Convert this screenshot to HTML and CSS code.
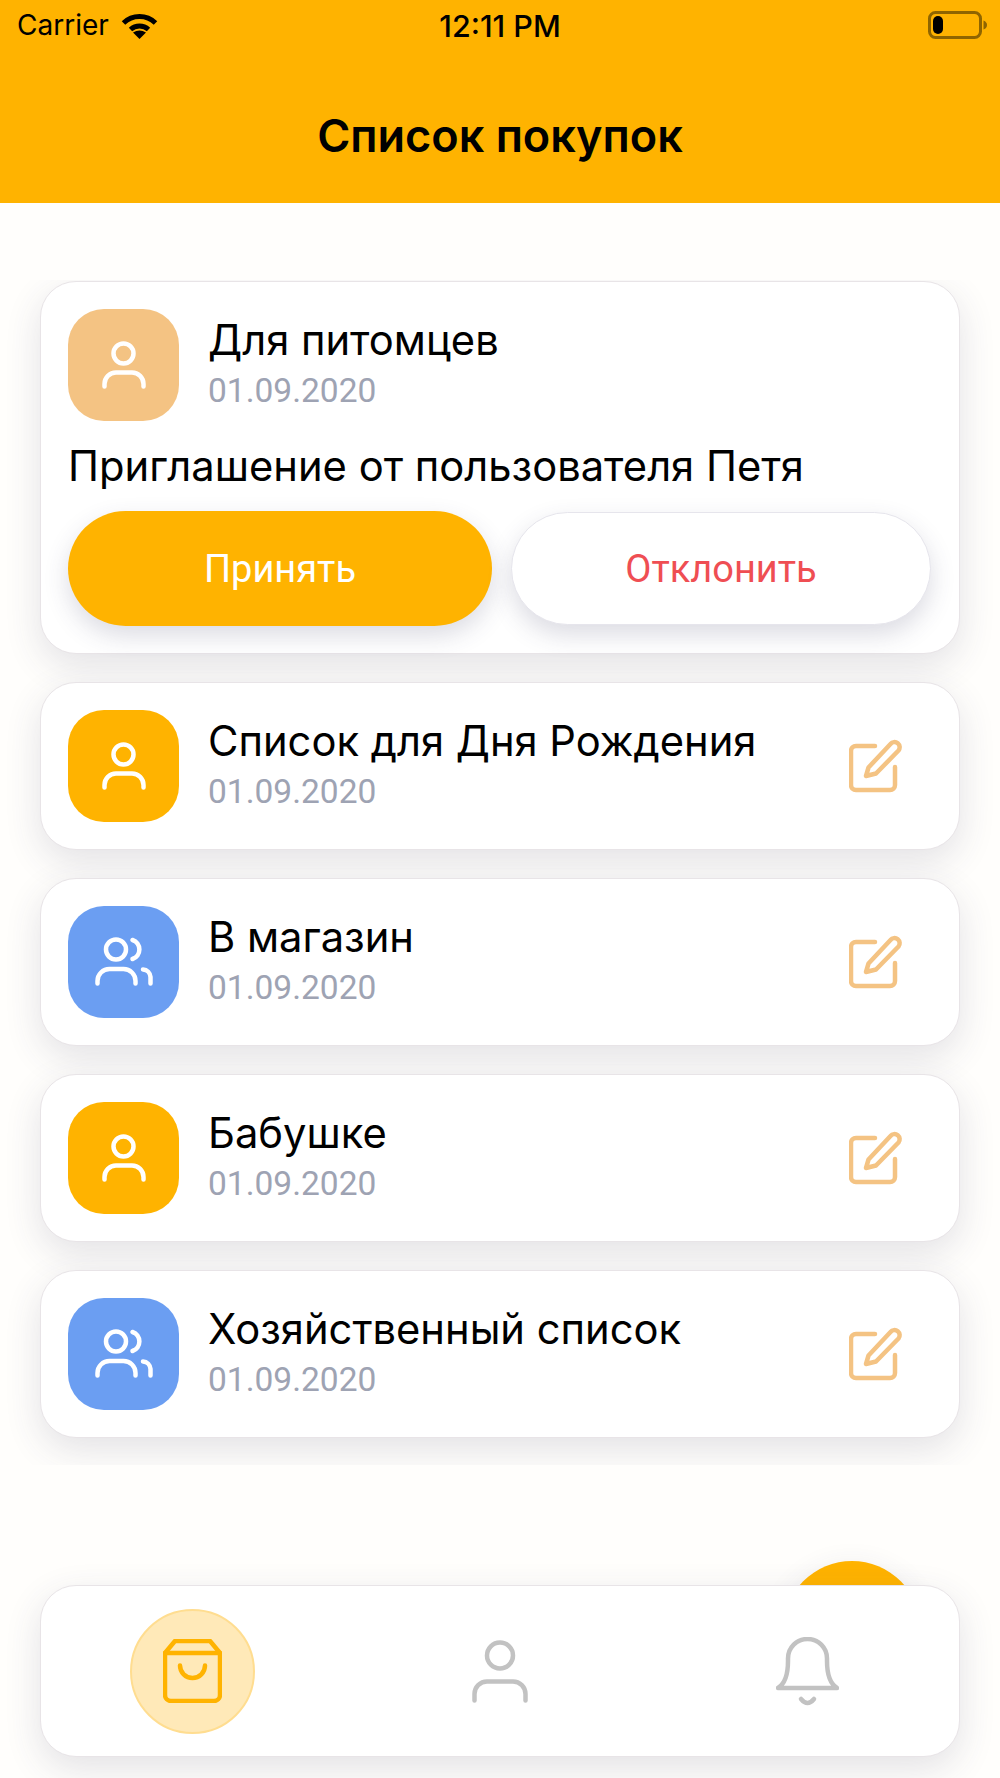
FILE: index.html
```html
<!DOCTYPE html>
<html>
<head>
<title>Список покупок</title>
<meta name="viewport" content="width=device-width, initial-scale=1.0">
<link rel="stylesheet" href="styles.css">
</head>
<body>

<svg class="sprites" width="0" height="0">
    <symbol id="person" viewBox="0 0 60 60">
        <circle cx="29.5" cy="18.5" r="10"/>
        <path d="M10.5 51.5V49A11.5 11.5 0 0 1 22 37.5H38A11.5 11.5 0 0 1 49.5 49V51.5"/>
    </symbol>
    <symbol id="group" viewBox="0 0 60 60">
        <circle cx="22" cy="17.5" r="10"/>
        <path d="M38.5 8A10 10 0 0 1 38.5 27"/>
        <path d="M3.5 51.5V49A12 12 0 0 1 15.5 37H29.5A12 12 0 0 1 41.5 49V51.5"/>
        <path d="M49 37.5A8 8 0 0 1 56.5 45V51.5"/>
    </symbol>
    <symbol id="edit" viewBox="0 0 54 54">
        <path d="M26 7H7A5 5 0 0 0 2 12V46A5 5 0 0 0 7 51H41A5 5 0 0 0 46 46V28"/>
        <path d="M17 37L19.5 28.5L41.5 5A5 5 0 0 1 49.5 11.5L27 34.5Z"/>
    </symbol>
</svg>

<div class="screen">
    <header class="top-bar">
        <div class="status-bar">
            <div class="status-left">
                <span>Carrier</span>
                <svg class="wifi" width="37" height="27" viewBox="0 0 37 27">
                    <path class="wifi-arc" d="M2.5 11A23 23 0 0 1 34.5 11"/>
                    <path class="wifi-arc" d="M9.5 17.5A13.500 13.500 0 0 1 27.500 17.500"/>
                    <path d="M18.500 27L12 20.500Q18.500 16.500 25 20.500Z"/>
                </svg>
            </div>
            <span class="status-time">12:11 PM</span>
            <svg class="battery" width="59" height="28" viewBox="0 0 59 28">
                <rect class="battery-case" x="1.500" y="1.500" width="51" height="25" rx="6"/>
                <rect x="5" y="5" width="10" height="18" rx="5"/>
                <path class="battery-nub" d="M55.500 9.500Q59 11 59 14T55.500 18.500Z"/>
            </svg>
        </div>
        <h1>Список покупок</h1>
    </header>

    <main class="list">
        <section class="card">
            <div class="card-row">
                <div class="avatar avatar-pending"><svg><use href="#person"/></svg></div>
                <div class="card-text">
                    <div class="card-title">Для питомцев</div>
                    <div class="card-date">01.09.2020</div>
                </div>
            </div>
            <p class="invite">Приглашение от пользователя Петя</p>
            <div class="invite-actions">
                <button type="button" class="btn btn-accept">Принять</button>
                <button type="button" class="btn btn-decline">Отклонить</button>
            </div>
        </section>

        <section class="card">
            <div class="card-row">
                <div class="avatar avatar-single"><svg><use href="#person"/></svg></div>
                <div class="card-text">
                    <div class="card-title">Список для Дня Рождения</div>
                    <div class="card-date">01.09.2020</div>
                </div>
                <svg class="edit"><use href="#edit"/></svg>
            </div>
        </section>

        <section class="card">
            <div class="card-row">
                <div class="avatar avatar-shared"><svg><use href="#group"/></svg></div>
                <div class="card-text">
                    <div class="card-title">В магазин</div>
                    <div class="card-date">01.09.2020</div>
                </div>
                <svg class="edit"><use href="#edit"/></svg>
            </div>
        </section>

        <section class="card">
            <div class="card-row">
                <div class="avatar avatar-single"><svg><use href="#person"/></svg></div>
                <div class="card-text">
                    <div class="card-title">Бабушке</div>
                    <div class="card-date">01.09.2020</div>
                </div>
                <svg class="edit"><use href="#edit"/></svg>
            </div>
        </section>

        <section class="card">
            <div class="card-row">
                <div class="avatar avatar-shared"><svg><use href="#group"/></svg></div>
                <div class="card-text">
                    <div class="card-title">Хозяйственный список</div>
                    <div class="card-date">01.09.2020</div>
                </div>
                <svg class="edit"><use href="#edit"/></svg>
            </div>
        </section>
    </main>

    <div class="fab"></div>

    <nav class="tab-bar">
        <div class="tab tab-active">
            <svg width="59" height="64" viewBox="0 0 59 64">
                <path d="M2 14V56A6 6 0 0 0 8 62H51A6 6 0 0 0 57 56V14L47 2H12Z"/>
                <path d="M2 14H57"/>
                <path d="M17 26.500A12.500 12.500 0 0 0 42 26.500"/>
            </svg>
        </div>
        <div class="tab">
            <svg width="56" height="63" viewBox="0 0 56 63">
                <circle cx="28" cy="15.500" r="13"/>
                <path d="M2.500 60.500V54A12.500 12.500 0 0 1 15 41.500H41A12.500 12.500 0 0 1 53.500 54V60.500"/>
            </svg>
        </div>
        <div class="tab">
            <svg width="63" height="69" viewBox="0 0 63 69">
                <path d="M2 51H61C53 46 51 36 51 24V21.500A19.500 19.500 0 0 0 12 21.500V24C12 36 10 46 2 51Z"/>
                <path d="M25 62Q31.500 70 38 62"/>
            </svg>
        </div>
    </nav>
</div>

</body>
</html>
```

FILE: styles.css
```css
* {
    box-sizing: border-box;
}
body {
    margin: 0;
    background-color: #fffefc;
    color: #000000;
    font-family: Roboto, sans-serif;
}
.sprites {
    position: absolute;
}
.screen {
    position: relative;
    display: flex;
    flex-direction: column;
    height: 1778px;
    overflow: hidden;
}

/* header */
.top-bar {
    flex: none;
    height: 203px;
    background-color: #ffb300;
    display: flex;
    flex-direction: column;
}
.status-bar {
    position: relative;
    display: flex;
    justify-content: space-between;
    align-items: center;
    height: 50px;
    padding: 0 13px 0 17px;
    font-family: Inter, sans-serif;
    font-size: 28px;
}
.status-left {
    display: flex;
    align-items: center;
    gap: 12px;
}
.status-time {
    position: absolute;
    left: 0;
    right: 0;
    text-align: center;
    font-size: 30.500px;
    font-weight: 500;
}
.wifi-arc {
    fill: none;
    stroke: #000000;
    stroke-width: 5;
}
.battery-case {
    fill: none;
    stroke: #8f6500;
    stroke-width: 3;
}
.battery-nub {
    fill: #8f6500;
}
h1 {
    margin: 0;
    flex: 1;
    padding-top: 18px;
    display: flex;
    align-items: center;
    justify-content: center;
    font-family: Inter, sans-serif;
    font-size: 45px;
    font-weight: 600;
}

/* cards */
.list {
    flex: none;
    height: 1185px;
    margin-top: 77px;
    padding: 1px 40px 0;
    display: flex;
    flex-direction: column;
    gap: 28px;
    overflow: hidden;
}
.card {
    flex: none;
    background: #ffffff;
    border: 1px solid #e8e4e7;
    border-radius: 36px;
    padding: 27px;
    box-shadow: 0 12px 36px rgba(60, 60, 90, 0.14);
}
.card-row {
    display: flex;
    align-items: center;
}
.avatar {
    flex: none;
    width: 111px;
    height: 112px;
    border-radius: 36px;
    display: flex;
    align-items: center;
    justify-content: center;
}
.avatar svg {
    width: 60px;
    height: 60px;
    fill: none;
    stroke: #ffffff;
    stroke-width: 4.500;
    stroke-linecap: round;
}
.avatar-pending {
    background-color: #f4c383;
}
.avatar-single {
    background-color: #ffb300;
}
.avatar-shared {
    background-color: #6b9ef2;
}
.card-text {
    flex: 1;
    align-self: flex-start;
    margin-left: 29px;
    padding-top: 6px;
}
.card-title {
    font-family: Inter, sans-serif;
    font-size: 41.700px;
    line-height: 50px;
}
.card-date {
    margin-top: 6px;
    font-size: 33.500px;
    line-height: 40px;
    color: #9ea3b3;
}
.edit {
    flex: none;
    width: 54px;
    height: 54px;
    margin-right: 29px;
    fill: none;
    stroke: #f4c383;
    stroke-width: 4.500;
    stroke-linecap: round;
    stroke-linejoin: round;
}

/* invitation */
.invite {
    margin: 20px 0 20px;
    font-family: Inter, sans-serif;
    font-size: 41.700px;
    line-height: 50px;
}
.invite-actions {
    display: flex;
    justify-content: space-between;
    align-items: center;
}
.btn {
    border-radius: 58px;
    font-family: Roboto, sans-serif;
    font-size: 38px;
    box-shadow: 0 10px 24px rgba(60, 60, 100, 0.18);
}
.btn-accept {
    width: 424px;
    height: 115px;
    border: none;
    background-color: #ffb300;
    color: #ffffff;
}
.btn-decline {
    width: 420px;
    height: 113px;
    margin-right: 1px;
    border: 1px solid #e6e5ec;
    background-color: #ffffff;
    color: #ef4e53;
}

/* bottom */
.fab {
    position: absolute;
    left: 783px;
    top: 1561px;
    width: 138px;
    height: 138px;
    border-radius: 50%;
    background-color: #ffb300;
    box-shadow: 0 8px 30px rgba(60, 60, 90, 0.12);
}
.tab-bar {
    position: absolute;
    left: 40px;
    right: 40px;
    top: 1585px;
    height: 172px;
    background: #ffffff;
    border: 1px solid #e8e4e7;
    border-radius: 36px;
    box-shadow: 0 12px 36px rgba(60, 60, 90, 0.14);
    display: flex;
    justify-content: space-between;
    align-items: center;
    padding: 0 89px;
}
.tab {
    width: 125px;
    height: 125px;
    border-radius: 50%;
    display: flex;
    align-items: center;
    justify-content: center;
}
.tab svg {
    fill: none;
    stroke: #c2c2c2;
    stroke-width: 4.500;
    stroke-linecap: round;
    stroke-linejoin: round;
}
.tab-active {
    background-color: #ffe9b8;
    border: 2px solid #ffdd90;
}
.tab-active svg {
    stroke: #ffb300;
}
```
